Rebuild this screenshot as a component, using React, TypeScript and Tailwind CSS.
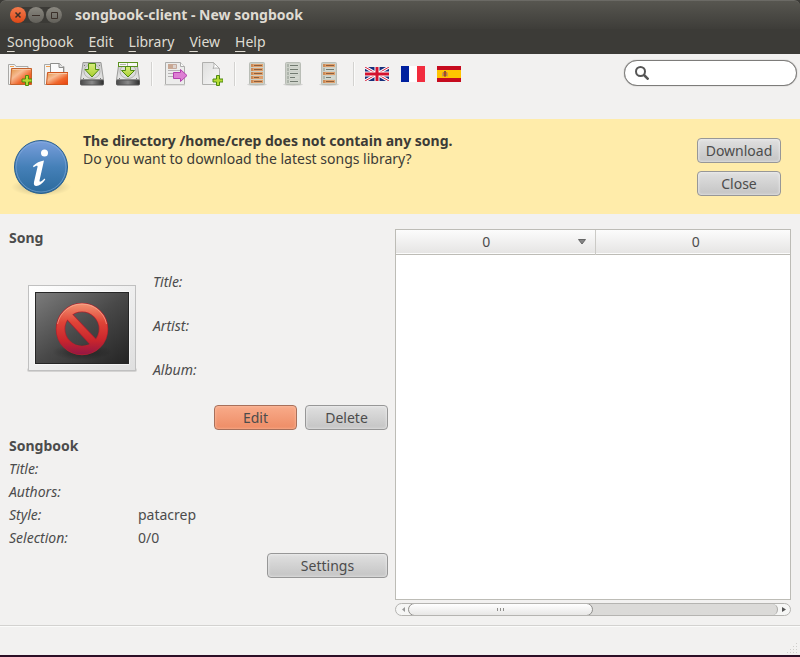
import React from "react";

function FolderBack() {
  return (
    <>
      <path d="M.5 22.500V2.500h6l1.500 2h12v18z" fill="#f4f4f3" stroke="#a9a9a7" />
      <path d="M2 4.500h4" stroke="#f3a04e" />
    </>
  );
}

function GreenPlus() {
  return (
    <path
      d="M17.500 13.500h3v3.500h3.500v3h-3.500v3.500h-3v-3.500h-3.500v-3h3.500z"
      fill="#b5dc35"
      stroke="#4e8a10"
      strokeLinejoin="round"
    />
  );
}

function Gradients() {
  return (
    <svg width="0" height="0" className="absolute" aria-hidden="true">
      <defs>
        <linearGradient id="orange" x1="0" y1="0" x2="1" y2="1">
          <stop offset="0" stopColor="#e0913f" />
          <stop offset=".35" stopColor="#f7bb93" />
          <stop offset=".65" stopColor="#f0672c" />
          <stop offset="1" stopColor="#e8400c" />
        </linearGradient>
        <linearGradient id="paper" x1="0" y1="0" x2="1" y2="1">
          <stop offset="0" stopColor="#dededd" />
          <stop offset="1" stopColor="#f8f8f8" />
        </linearGradient>
        <linearGradient id="metal" x1="0" y1="0" x2="0" y2="1">
          <stop offset="0" stopColor="#c9c9c8" />
          <stop offset="1" stopColor="#e6e6e5" />
        </linearGradient>
        <linearGradient id="drive" x1="0" y1="0" x2="1" y2="0">
          <stop offset="0" stopColor="#4a4a4a" />
          <stop offset=".5" stopColor="#8a8a8a" />
          <stop offset="1" stopColor="#2e2e2e" />
        </linearGradient>
        <linearGradient id="lime" x1="0" y1="0" x2="0" y2="1">
          <stop offset="0" stopColor="#d8ec7c" />
          <stop offset="1" stopColor="#a9cf2e" />
        </linearGradient>
        <linearGradient id="blue" x1="0" y1="0" x2="0" y2="1">
          <stop offset="0" stopColor="#7a9fdc" />
          <stop offset=".5" stopColor="#4580b8" />
          <stop offset="1" stopColor="#2b6a9c" />
        </linearGradient>
        <radialGradient id="shade">
          <stop offset="0" stopColor="#000" stopOpacity=".4" />
          <stop offset="1" stopColor="#000" stopOpacity="0" />
        </radialGradient>
        <linearGradient id="screen" x1="0" y1="0" x2="1" y2="1">
          <stop offset="0" stopColor="#7c7c7c" />
          <stop offset=".5" stopColor="#494949" />
          <stop offset="1" stopColor="#242424" />
        </linearGradient>
        <linearGradient id="frame" x1="0" y1="0" x2="1" y2="1">
          <stop offset="0" stopColor="#ffffff" />
          <stop offset="1" stopColor="#dfdfdf" />
        </linearGradient>
        <linearGradient id="red" gradientUnits="userSpaceOnUse" x1="0" y1="20" x2="0" y2="72">
          <stop offset="0" stopColor="#f39070" />
          <stop offset=".35" stopColor="#df4437" />
          <stop offset=".7" stopColor="#c9252c" />
          <stop offset="1" stopColor="#8e1546" />
        </linearGradient>
      </defs>
    </svg>
  );
}

function Icon({ children }: { children: React.ReactNode }) {
  return (
    <svg width="24" height="24" viewBox="0 0 24 24" fill="none" aria-hidden="true">
      {children}
    </svg>
  );
}

function NewFolderIcon() {
  return (
    <Icon>
      <FolderBack />
      <path d="M3.500 6.500h20v16h-21z" fill="url(#orange)" stroke="#c4622c" />
      <path d="M4.500 7.500h18" stroke="#f6c9a6" />
      <GreenPlus />
    </Icon>
  );
}

function OpenFolderIcon() {
  return (
    <Icon>
      <FolderBack />
      <path d="M6.500 12V1.500h9l4 4V12z" fill="#fafafa" stroke="#8d8d8b" />
      <path d="M15 1.500v4h5" stroke="#8d8d8b" fill="#e2e2e2" />
      <path d="M3.500 10.500h20.500v12H2.500z" fill="url(#orange)" stroke="#d0551c" />
      <path d="M4.500 11.500h18.500" stroke="#f6c9a6" />
    </Icon>
  );
}

function DriveIcon({ slot = false }: { slot?: boolean }) {
  return (
    <Icon>
      <path d="M3 .5h18l2.500 17.500H.5z" fill="url(#metal)" stroke="#9b9b99" strokeLinejoin="round" />
      <ellipse cx="12" cy="9.500" rx="8" ry="7" fill="#dcdcdb" stroke="#b4b4b2" />
      <path d="M4 3.500h1M19 3.500h1M3 16.500h1M20 16.500h1" stroke="#777" />
      <rect x=".5" y="18" width="23" height="5" rx="1" fill="url(#drive)" stroke="#555" />
      {slot && <rect x="2.500" y=".5" width="19" height="4" fill="#f8f8f5" stroke="#5c9220" />}
      {slot && <path d="M4 2.500h6M11.500 1v3" stroke="#b5b5b0" />}
      <path
        d={slot ? "M9.500 4.500h5v4h4L12 15 5.500 8.500h4z" : "M8.500 1.500h7v6h3.500l-7 7.500-7-7.500h3.500z"}
        fill="url(#lime)"
        stroke="#4f8a12"
      />
    </Icon>
  );
}

function ExportIcon() {
  return (
    <Icon>
      <path d="M2.500 .5h15l4 4v18h-19z" fill="#ececeb" stroke="#adadab" />
      <path d="M17.500 .5v4h4" fill="#fafafa" stroke="#adadab" />
      <path d="M5 8.500h12M5 11.500h5M5 14.500h5" stroke="#b5b3b3" />
      <path d="M5.500 2.500h8v4h-8z" fill="#dcd3ce" stroke="#c4aa9d" />
      <path d="M5 2h5v5H5z" fill="#c9a894" />
      <path d="M10.500 10.500h7v-3l6.500 6-6.500 6v-3h-7z" fill="#dd7fd3" stroke="#b43fae" />
      <path d="M1 23h21" stroke="#cfcfcd" />
    </Icon>
  );
}

function NewPageIcon() {
  return (
    <Icon>
      <path d="M3.500 .5h11l6 6v16h-17z" fill="url(#paper)" stroke="#b0b0ae" />
      <path d="M14.500 .5c1 2 .5 4-.5 6 2-.7 4-.6 6.500 0z" fill="#fff" stroke="#b0b0ae" />
      <GreenPlus />
    </Icon>
  );
}

function ListIcon({ marked }: { marked: boolean[] }) {
  return (
    <Icon>
      <ellipse cx="11" cy="22.500" rx="10" ry="1.500" fill="#000" opacity=".12" />
      <rect x="3.500" y=".5" width="15" height="22" rx="1" fill="#ccd0c8" stroke="#b9bdb6" />
      {marked.map((on, i) => (
        <g key={i}>
          <rect x="5" y={2 + i * 4} width="12" height="3" fill={on ? "#dfa06c" : "#d3d7cf"} />
          <rect x="5" y={2 + i * 4} width="2" height="3" fill={on ? "#cc8a56" : "#aeb5ac"} />
          <rect x="8" y={3 + i * 4} width={i === 3 ? 5 : 8} height="1" fill={on ? "#8e5f3c" : "#717a70"} />
        </g>
      ))}
    </Icon>
  );
}

function UkFlag() {
  return (
    <Icon>
      <svg x="0" y="5" width="24" height="14" viewBox="0 0 24 14">
        <path d="M0 0h24v14H0z" fill="#17307c" />
        <path d="M0 0l24 14M24 0L0 14" stroke="#fff" strokeWidth="3" />
        <path d="M0 0l24 14M24 0L0 14" stroke="#d8203c" strokeWidth="1" />
        <path d="M12 0v14M0 7h24" stroke="#fff" strokeWidth="5" />
        <path d="M12 0v14M0 7h24" stroke="#d3122f" strokeWidth="3" />
      </svg>
    </Icon>
  );
}

function FranceFlag() {
  return (
    <Icon>
      <path d="M0 4h8v16H0z" fill="#00209f" />
      <path d="M8 4h8v16H8z" fill="#fff" />
      <path d="M16 4h8v16h-8z" fill="#f22c3e" />
    </Icon>
  );
}

function SpainFlag() {
  return (
    <Icon>
      <path d="M0 4h24v16H0z" fill="#c60b1e" />
      <path d="M0 8h24v8H0z" fill="#ffc400" />
      <path d="M5.500 10.500v4M10.500 10.500v4" stroke="#c69a55" />
      <path d="M6.500 10h3v4l-1.500 1-1.500-1z" fill="#a8452e" />
      <path d="M7 9.500h2M7 12.500h2" stroke="#77603f" />
    </Icon>
  );
}

function InfoIcon() {
  return (
    <svg width="60" height="60" viewBox="0 0 60 60" fill="none" aria-hidden="true">
      <ellipse cx="30" cy="49" rx="30" ry="9" fill="url(#shade)" opacity=".6" />
      <circle cx="30" cy="29" r="26.500" fill="url(#blue)" stroke="#285f8e" />
      <circle cx="30" cy="29" r="25" stroke="#8fb4e0" strokeOpacity=".5" />
      <circle cx="33.500" cy="15" r="3.500" fill="#fff" />
      <path
        d="M22 28c3-3 7-5 11-5.500l-4.500 20c-.3 2 1.500 1.500 5-2l.8 1c-3 4-6 6.500-9 6.500-2 0-2.800-1.500-2.300-4l3.500-15c.4-2-1.500-1.500-4 .3z"
        fill="#fff"
      />
    </svg>
  );
}

function CoverPlaceholder() {
  return (
    <svg width="110" height="90" viewBox="0 0 110 90" fill="none" role="img" aria-label="No cover">
      <rect x="0" y="84" width="110" height="4" rx="2" fill="#000" opacity=".12" />
      <rect x="1.500" y="1.500" width="107" height="85" fill="url(#frame)" stroke="#c0c0c0" />
      <rect x="7.500" y="7.500" width="95" height="73" fill="#fff" />
      <rect x="8.500" y="8.500" width="93" height="71" fill="url(#screen)" stroke="#262626" />
      <ellipse cx="55" cy="68" rx="30" ry="8" fill="url(#shade)" />
      <circle cx="55" cy="45" r="21.500" stroke="#b0222d" strokeWidth="9.500" />
      <path d="M40.500 30.500l29 31" stroke="#a81f2f" strokeWidth="8.500" />
      <circle cx="55" cy="45" r="21.500" stroke="url(#red)" strokeWidth="8" />
      <path d="M40.500 30.500l29 31" stroke="url(#red)" strokeWidth="7" />
      <path d="M30.500 40a25 25 0 0 1 49 0" stroke="#f9b9a0" strokeOpacity=".6" />
    </svg>
  );
}

function ToolButton({ label, children }: { label: string; children: React.ReactNode }) {
  return (
    <button type="button" aria-label={label} className="flex h-7 w-9 items-center justify-center">
      {children}
    </button>
  );
}

function Separator() {
  return (
    <div className="flex h-7 w-[11px] justify-center py-0.5">
      <div className="w-0.5 border-l border-[#d3d2d0] bg-[#fbfbfa]" />
    </div>
  );
}

function PushButton({ children, width, primary = false }: { children: string; width: string; primary?: boolean }) {
  const tone = primary
    ? "border-[#a7705b] bg-linear-to-b from-[#f8ab8a] to-[#ee8c65] shadow-[inset_0_0_3px_#ffc4a8]"
    : "border-[#979797] bg-linear-to-b from-[#e0e0e0] to-[#c4c4c4] shadow-[inset_0_0_3px_#f4f4f4]";
  return (
    <button type="button" className={`h-[25px] rounded border text-[#4c4c4c] ${width} ${tone}`}>
      {children}
    </button>
  );
}

function WindowButton({ label, close = false, children }: { label: string; close?: boolean; children: React.ReactNode }) {
  return (
    <button
      type="button"
      aria-label={label}
      className={`flex size-4 items-center justify-center rounded-full ${
        close ? "bg-linear-to-b from-[#f37b4c] to-[#dd4814]" : "bg-linear-to-b from-[#8a8880] to-[#62605a]"
      }`}
    >
      <svg width="16" height="16" viewBox="0 0 16 16" fill="none" stroke="#3a2f29" aria-hidden="true">
        {children}
      </svg>
    </button>
  );
}

function Field({ label, value = "", row }: { label: string; value?: string; row: string }) {
  return (
    <div className={`flex items-center ${row}`}>
      <dt className="w-[129px] italic">{label}</dt>
      <dd>{value}</dd>
    </div>
  );
}

const menus = ["Songbook", "Edit", "Library", "View", "Help"];

export default function App() {
  return (
    <div className="flex min-h-screen flex-col bg-[#f2f1f0] font-['Noto_Sans','Open_Sans',sans-serif] text-sm leading-[18px] text-[#4c4c4c]">
      <Gradients />
      <header className="bg-[#3c3b37]">
        <div className="flex h-[29px] items-center rounded-t-md border-t border-[#6b6a65] bg-linear-to-b from-[#575650] to-[#3e3d39] pb-px pl-2.5">
          <div className="flex gap-0.5 rounded-full bg-[#3b3a36]">
            <WindowButton label="Close window" close>
              <path d="M5.500 5.500l5 5M10.500 5.500l-5 5" strokeWidth="1.500" />
            </WindowButton>
            <WindowButton label="Minimize">
              <path d="M4 8.500h8" />
            </WindowButton>
            <WindowButton label="Maximize">
              <path d="M5.500 5.500h6v6h-6z" />
            </WindowButton>
          </div>
          <h1 className="ml-[13px] font-bold text-[#dfdbd2]">songbook-client - New songbook</h1>
        </div>
        <nav className="flex h-[25px] items-center gap-[15px] pl-[7px] text-[#dfdbd2]">
          {menus.map((name) => (
            <button key={name} type="button">
              <span className="underline decoration-1 underline-offset-4">{name[0]}</span>
              {name.slice(1)}
            </button>
          ))}
        </nav>
      </header>

      <div role="toolbar" className="flex items-start pt-1.5 pr-[3px] pb-[31px] pl-0.5">
        <ToolButton label="New songbook"><NewFolderIcon /></ToolButton>
        <ToolButton label="Open songbook"><OpenFolderIcon /></ToolButton>
        <ToolButton label="Save"><DriveIcon /></ToolButton>
        <ToolButton label="Save as"><DriveIcon slot /></ToolButton>
        <Separator />
        <ToolButton label="Build PDF"><ExportIcon /></ToolButton>
        <ToolButton label="Add song"><NewPageIcon /></ToolButton>
        <Separator />
        <ToolButton label="Select all"><ListIcon marked={[true, true, true, true, true]} /></ToolButton>
        <ToolButton label="Unselect all"><ListIcon marked={[false, false, false, false, false]} /></ToolButton>
        <ToolButton label="Invert selection"><ListIcon marked={[true, false, true, false, true]} /></ToolButton>
        <Separator />
        <ToolButton label="English songs"><UkFlag /></ToolButton>
        <ToolButton label="French songs"><FranceFlag /></ToolButton>
        <ToolButton label="Spanish songs"><SpainFlag /></ToolButton>
        <label className="ml-auto flex h-[26px] w-[173px] items-center rounded-full border border-[#7d7c7a] bg-white pl-2.5 shadow-[0_0_1px_#7d7c7a]">
          <svg width="14" height="14" viewBox="0 0 14 14" fill="none" stroke="#555" aria-hidden="true">
            <circle cx="5.500" cy="5.500" r="4.500" strokeWidth="2" />
            <path d="M8.500 8.500l5 5" strokeWidth="2.500" />
          </svg>
          <input type="text" aria-label="Search" className="ml-1 w-32 outline-none" />
        </label>
      </div>

      <section className="flex items-start bg-[#ffecaa] pt-[13px] pr-[19px] pb-3 pl-[11px] text-[#3c3b37]">
        <div className="pt-1.5 pb-1"><InfoIcon /></div>
        <div className="ml-3 flex-1">
          <p className="font-bold">The directory /home/crep does not contain any song.</p>
          <p>Do you want to download the latest songs library?</p>
        </div>
        <div className="flex flex-col gap-2 py-1.5">
          <PushButton width="w-[84px]">Download</PushButton>
          <PushButton width="w-[84px]">Close</PushButton>
        </div>
      </section>

      <main className="flex flex-1 gap-[7px] px-[9px] pt-[15px] pb-[9px]">
        <div className="w-[379px] shrink-0">
          <h2 className="font-bold">Song</h2>
          <div className="mt-[13px] flex items-center pl-[18px]">
            <div className="pt-1.5"><CoverPlaceholder /></div>
            <dl className="ml-4">
              <Field row="h-11" label="Title:" />
              <Field row="h-11" label="Artist:" />
              <Field row="h-11" label="Album:" />
            </dl>
          </div>
          <div className="mt-[13px] flex justify-end gap-2">
            <PushButton width="w-[83px]" primary>Edit</PushButton>
            <PushButton width="w-[83px]">Delete</PushButton>
          </div>
          <h2 className="mt-1 flex h-[23px] items-center font-bold">Songbook</h2>
          <dl>
            <Field row="h-[23px]" label="Title:" />
            <Field row="h-[23px]" label="Authors:" />
            <Field row="h-[23px]" label="Style:" value="patacrep" />
            <Field row="h-[23px]" label="Selection:" value="0/0" />
          </dl>
          <div className="mt-1 flex justify-end">
            <PushButton width="w-[121px]">Settings</PushButton>
          </div>
        </div>

        <div className="flex min-w-0 flex-1 flex-col gap-[3px]">
          <div className="flex-1 border border-[#bdbcb6] bg-white">
            <table className="w-full table-fixed border-collapse">
              <thead>
                <tr className="h-6 border-b border-[#bdbcb6] bg-linear-to-b from-[#fcfcfc] to-[#e6e5e4]">
                  <th className="w-[199px] border-r border-[#cbcac6] p-0 pt-px font-normal">
                    <div className="flex items-center pr-2">
                      <span className="flex-1">0</span>
                      <svg width="10" height="6" viewBox="0 0 10 6" fill="#858585" stroke="#666" aria-hidden="true">
                        <path d="M1.500.5h7L5 5z" />
                      </svg>
                    </div>
                  </th>
                  <th className="p-0 pt-px pl-1.5 font-normal">0</th>
                </tr>
              </thead>
            </table>
          </div>
          <div className="flex h-[13px] overflow-hidden rounded-full border border-[#b5b4b1] bg-[#f6f6f5]">
            <button type="button" aria-label="Scroll left" className="flex w-3 shrink-0 items-center pl-1.5">
              <svg width="3" height="5" viewBox="0 0 3 5" fill="#9a9a9a" aria-hidden="true"><path d="M3 0v5L0 2.500z" /></svg>
            </button>
            <div className="flex flex-1 rounded-r-full border-r border-[#a9a8a5] bg-linear-to-r from-[#f6f6f5] from-5% to-[#dbdad8] to-5%">
              <div className="-my-px flex w-1/2 items-center justify-center gap-0.5 rounded-full border border-[#8f8e8b] bg-linear-to-b from-white to-[#e8e7e6]">
                <i className="h-[3px] w-px bg-[#8f8e8b]" />
                <i className="h-[3px] w-px bg-[#8f8e8b]" />
                <i className="h-[3px] w-px bg-[#8f8e8b]" />
              </div>
            </div>
            <button type="button" aria-label="Scroll right" className="flex w-3 shrink-0 items-center justify-end pr-1">
              <svg width="4" height="5" viewBox="0 0 4 5" fill="#555" aria-hidden="true"><path d="M0 0v5l4-2.500z" /></svg>
            </button>
          </div>
        </div>
      </main>

      <footer className="flex h-8 items-end justify-end border-t border-b-2 border-t-[#d3d2d0] border-b-[#2c0f26] pr-0.5 pb-0.5 shadow-[inset_0_1px_0_#fbfbfa]">
        <svg width="11" height="11" viewBox="0 0 11 11" stroke="#cfcecb" strokeDasharray="1 2" aria-hidden="true">
          <path d="M9 1.500h2M6 4.500h5M3 7.500h8M0 10.500h11" />
        </svg>
      </footer>
    </div>
  );
}
